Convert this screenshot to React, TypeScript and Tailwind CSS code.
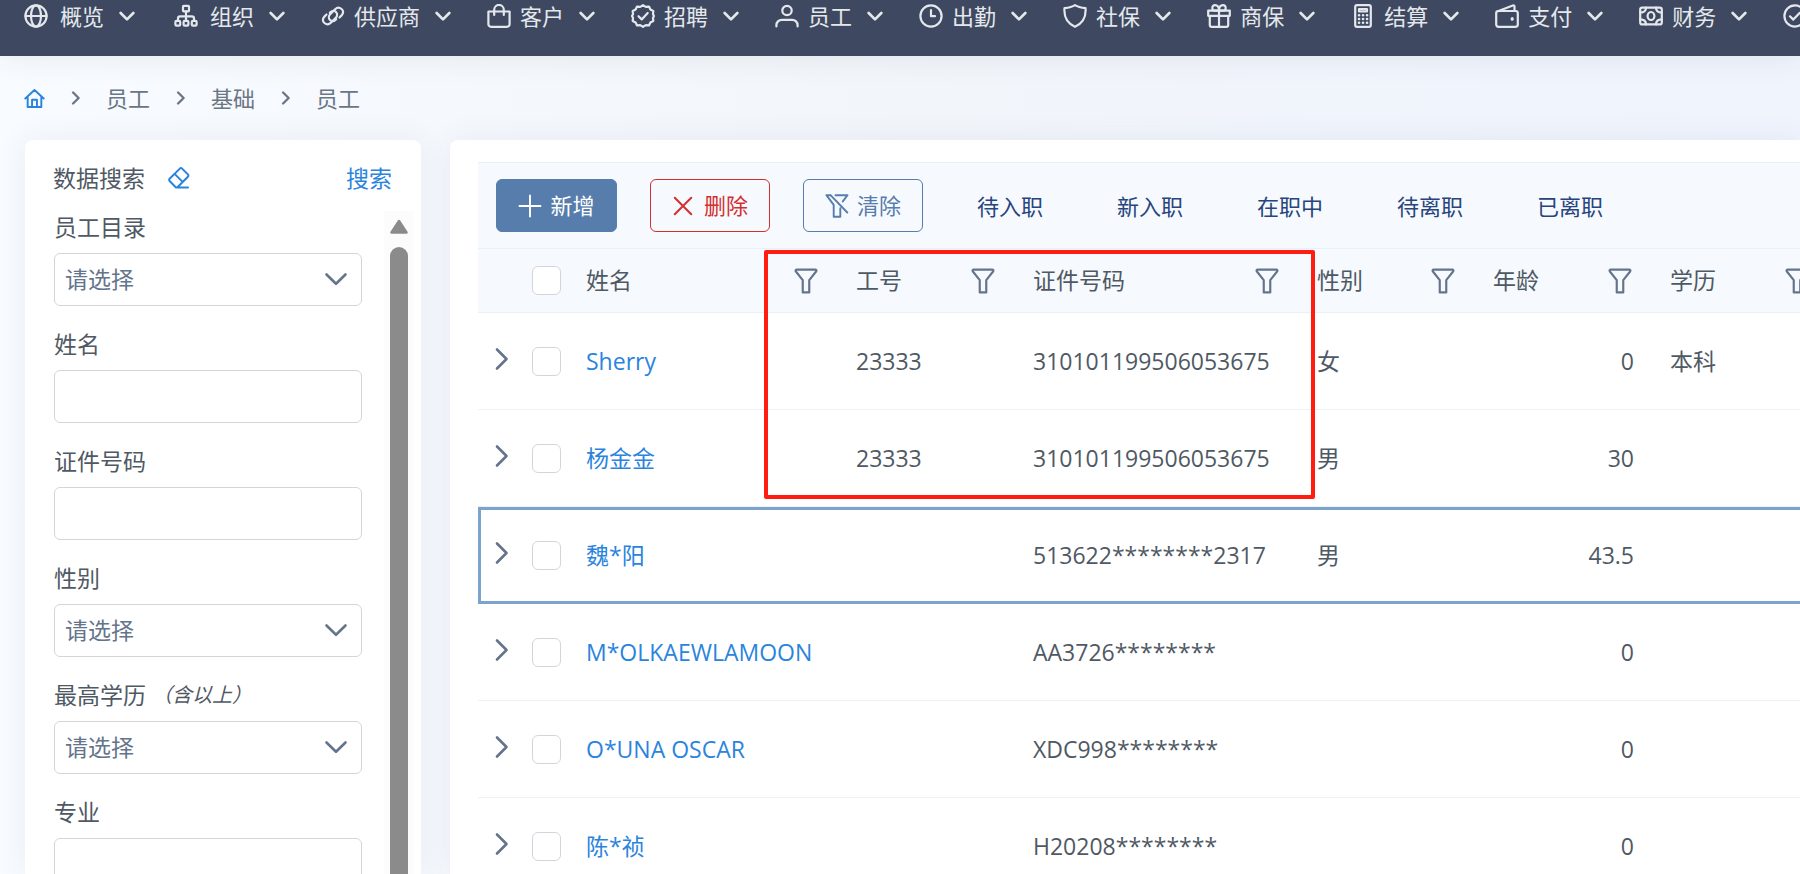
import type { ReactNode } from 'react';

const font = "font-['Open_Sans','Noto_Sans_CJK_SC',sans-serif]";

function Icon({ children, className = 'size-6', width = 2 }: { children: ReactNode; className?: string; width?: number }) {
  return (
    <svg
      viewBox="0 0 24 24"
      fill="none"
      stroke="currentColor"
      strokeWidth={width}
      strokeLinecap="round"
      strokeLinejoin="round"
      className={`shrink-0 ${className}`}
      aria-hidden="true"
    >
      {children}
    </svg>
  );
}

const icons = {
  globe: (
    <>
      <circle cx="12" cy="12" r="10.6" />
      <ellipse cx="12" cy="12" rx="5" ry="10.6" />
      <path d="M1.4 12h21.2" />
    </>
  ),
  sitemap: (
    <>
      <rect x="9" y="1.8" width="6" height="5.6" rx="0.8" />
      <rect x="1.4" y="16.8" width="4.8" height="4.8" rx="1.2" />
      <rect x="9.6" y="16.8" width="4.8" height="4.8" rx="1.2" />
      <rect x="17.8" y="16.8" width="4.8" height="4.8" rx="1.2" />
      <path d="M12 7.4v9.4M4 16.8v-2.2q0-2.2 2.2-2.2h11.6q2.2 0 2.2 2.2v2.2" />
    </>
  ),
  link: (
    <>
      <path d="M5.5 10.5 3.4 12.6c-2 2-2 4.8 0 6.400s4.600 1.600 6.400-.2l5-5c1.800-1.800 1.700-4.300.2-5.800s-3.800-1.500-5.400.1l-.8.8" />
      <path d="M18.5 13.5 20.6 11.4c2-2 2-4.8 0-6.400s-4.600-1.600-6.400.2l-5 5c-1.800 1.800-1.700 4.300-.2 5.800s3.800 1.500 5.400-.1l.8-.8" />
    </>
  ),
  bag: (
    <>
      <path d="M1.4 7.5h21.2v12.7a2.6 2.6 0 0 1-2.6 2.6H4a2.6 2.6 0 0 1-2.6-2.6z" />
      <path d="M7.2 11V5.8a4.8 4.8 0 0 1 9.6 0V11" />
    </>
  ),
  verified: (
    <>
      <path d="M12 1.2l2.8 1.7 3.2-.3 1.4 2.9 2.9 1.5-.3 3.2 1 1.8-1 1.8.3 3.2-2.9 1.5-1.4 2.9-3.2-.3-2.8 1.7-2.8-1.7-3.2.3-1.4-2.9L1.7 17l.3-3.2L1 12l1-1.8L1.7 7l2.9-1.5L6 2.6l3.2.3z" />
      <path d="M7.5 12.2l3.2 3.2 6-6.4" />
    </>
  ),
  user: (
    <>
      <circle cx="12" cy="6.5" r="4.7" />
      <path d="M1.4 22.5v-1.3c0-3 2.4-5.4 5.4-5.4h10.4c3 0 5.4 2.4 5.4 5.4v1.3" />
    </>
  ),
  clock: (
    <>
      <circle cx="12" cy="12" r="10.6" />
      <path d="M12 6v6.2h4" />
    </>
  ),
  shield: <path d="M12 1.2c3 2 6.5 2.6 10.5 3 .7 8-2.5 15-10.5 18.6C4 19.2.8 12.2 1.5 4.2c4-.4 7.5-1 10.5-3z" />,
  gift: (
    <>
      <path d="M1.2 6.6h21.6v5.2H1.2zM2.8 11.8h18.4v9.2a1.8 1.8 0 0 1-1.8 1.8H4.6a1.8 1.8 0 0 1-1.8-1.8zM12 6.6v16.2" />
      <path d="M12 6.6H8c-3.6 0-3.6-5.4 0-5.4 2.6 0 4 2.4 4 5.4zM12 6.6h4c3.6 0 3.6-5.4 0-5.4-2.6 0-4 2.4-4 5.4z" />
    </>
  ),
  calculator: (
    <>
      <rect x="4.2" y="1.2" width="15.6" height="21.6" rx="1.8" />
      <rect x="8" y="5" width="8" height="2.4" />
      <path d="M8 11.3h.1M12 11.3h.1M16 11.3h.1M8 15h.1M12 15h.1M16 15h.1M8 18.7h.1M12 18.7h.1M16 18.7h.1" strokeWidth="2.6" />
    </>
  ),
  wallet: (
    <>
      <rect x="1.2" y="7" width="21.6" height="15.8" rx="2.2" />
      <path d="M3.5 7 17.8 1.5q1.7-.5 1.7 1.3V7" />
      <path d="M17.2 14.6v.6" strokeWidth="3" />
    </>
  ),
  money: (
    <>
      <rect x="1.2" y="3.6" width="21.6" height="16.8" rx="2" />
      <ellipse cx="12" cy="12" rx="3.4" ry="4" />
      <path d="M7 3.6q0 5-5.8 5M17 3.6q0 5 5.8 5M7 20.4q0-5-5.8-5M17 20.4q0-5 5.8-5" />
    </>
  ),
  checkCircle: (
    <>
      <circle cx="12" cy="12" r="10.6" />
      <path d="M7 12.3l3.3 3.3 6.5-6.8" />
    </>
  ),
};

const chevronDown = <path d="M2.5 7.5 12 17l9.5-9.5" />;
const chevronRight = <path d="M7 2.5 16.5 12 7 21.5" />;

const navItems = [
  { label: '概览', icon: icons.globe, wide: true },
  { label: '组织', icon: icons.sitemap, wide: true },
  { label: '供应商', icon: icons.link },
  { label: '客户', icon: icons.bag },
  { label: '招聘', icon: icons.verified },
  { label: '员工', icon: icons.user },
  { label: '出勤', icon: icons.clock },
  { label: '社保', icon: icons.shield },
  { label: '商保', icon: icons.gift },
  { label: '结算', icon: icons.calculator },
  { label: '支付', icon: icons.wallet },
  { label: '财务', icon: icons.money },
];

const searchFields = [
  { id: 'catalog', label: '员工目录', type: 'select' },
  { id: 'name', label: '姓名', type: 'text' },
  { id: 'idNumber', label: '证件号码', type: 'text' },
  { id: 'gender', label: '性别', type: 'select' },
  { id: 'education', label: '最高学历', hint: '（含以上）', type: 'select' },
  { id: 'major', label: '专业', type: 'text' },
];

const statusTabs = ['待入职', '新入职', '在职中', '待离职', '已离职'];

const columns = ['姓名', '工号', '证件号码', '性别', '年龄', '学历'];

const employees = [
  { name: 'Sherry', no: '23333', idNumber: '310101199506053675', gender: '女', age: '0', education: '本科' },
  { name: '杨金金', no: '23333', idNumber: '310101199506053675', gender: '男', age: '30', education: '' },
  { name: '魏*阳', no: '', idNumber: '513622********2317', gender: '男', age: '43.5', education: '', selected: true },
  { name: 'M*OLKAEWLAMOON', no: '', idNumber: 'AA3726********', gender: '', age: '0', education: '' },
  { name: 'O*UNA OSCAR', no: '', idNumber: 'XDC998********', gender: '', age: '0', education: '' },
  { name: '陈*祯', no: '', idNumber: 'H20208********', gender: '', age: '0', education: '' },
];

function TopNav() {
  return (
    <nav className="relative h-14 shrink-0 overflow-hidden bg-[#3e4860] pl-[21px] text-[#e4e8ec]">
      <ul className="flex w-max gap-9">
        {navItems.map((item) => (
          <li key={item.label}>
            <button type="button" className="flex h-8 items-center text-[22px] leading-8">
              <span className={item.wide ? 'flex w-[30px] justify-center' : 'flex w-6 justify-center'}>
                <Icon width={2.2}>{item.icon}</Icon>
              </span>
              <span className="ml-[9px]">{item.label}</span>
              <Icon className="ml-[15px] size-4" width={4}>{chevronDown}</Icon>
            </button>
          </li>
        ))}
        <li>
          <button type="button" aria-label="更多" className="flex h-8 items-center">
            <Icon width={2.2}>{icons.checkCircle}</Icon>
          </button>
        </li>
      </ul>
    </nav>
  );
}

function Breadcrumb() {
  return (
    <nav aria-label="breadcrumb" className="flex h-[84px] shrink-0 items-center pl-6 text-[22px] text-[#6b7685]">
      <a href="#home" aria-label="首页" className="text-[#2a84dd]">
        <Icon className="size-[21px]" width={2.2}>
          <path d="M1.5 12 12 2.2 22.5 12M4.2 9.8v12h15.6v-12M9.2 21.8v-8.3h5.6v8.3" />
        </Icon>
      </a>
      {['员工', '基础', '员工'].map((label, i) => (
        <span key={i} className="flex items-center">
          <span className="flex w-[61px] justify-center">
            <Icon className="size-[14px]" width={4}>{chevronRight}</Icon>
          </span>
          <a href="#crumb">{label}</a>
        </span>
      ))}
    </nav>
  );
}

function SearchPanel() {
  const field = 'h-[53px] w-full rounded-md border border-[#d2d6dc] bg-white px-[10px] text-[23px] text-[#64748b]';
  return (
    <aside className="flex w-[396px] shrink-0 flex-col overflow-hidden rounded-t-lg bg-white shadow-[0_0_30px_rgba(60,80,110,0.08)]">
      <header className="flex h-[71px] shrink-0 items-center pt-1.5 pr-[29px] pl-7 text-[23px]">
        <h2>数据搜索</h2>
        <button type="button" aria-label="清空" className="ml-[22px] text-[#2a84dd]">
          <Icon className="size-6" width={2}>
            <path d="M9 20.5 2.6 14a1.6 1.6 0 0 1 0-2.3L12.8 1.6a1.6 1.6 0 0 1 2.3 0l5.8 5.8a1.6 1.6 0 0 1 0 2.3L10.2 20.5zM7.6 6.9l8 8M9 20.5h12" />
          </Icon>
        </button>
        <button type="button" className="ml-auto text-[#2a84dd]">搜索</button>
      </header>
      <div className="flex min-h-0 flex-1 justify-between pr-[7px] pl-[29px]">
        <form className="flex w-[308px] flex-col gap-[22px]">
          {searchFields.map((f) => (
            <div key={f.id} className="shrink-0">
              <label htmlFor={f.id} className="flex h-[42px] items-center pb-[10px] text-[23px]">
                {f.label}
                {f.hint && <em className="ml-1.5 text-[20px]">{f.hint}</em>}
              </label>
              {f.type === 'select' ? (
                <div className="relative">
                  <select id={f.id} className={`${field} appearance-none`}>
                    <option>请选择</option>
                  </select>
                  <Icon className="pointer-events-none absolute top-[14px] right-[14px] size-6 text-[#64748b]" width={2.6}>
                    <path d="M2.5 7.5 12 16.8l9.5-9.3" />
                  </Icon>
                </div>
              ) : (
                <input id={f.id} type="text" className={field} />
              )}
            </div>
          ))}
        </form>
        {/* scrollbar */}
        <div className="flex w-[30px] flex-col items-center bg-[#fcfcfc] pt-2">
          <svg viewBox="0 0 18 15" className="h-[15px] w-[18px] shrink-0" aria-hidden="true">
            <path d="M9 2 16.5 13.5H1.5z" fill="#8b8b8b" stroke="#8b8b8b" strokeWidth="2.5" strokeLinejoin="round" />
          </svg>
          <div className="mt-[13px] w-[18px] flex-1 rounded-t-full bg-[#8b8b8b]" />
        </div>
      </div>
    </aside>
  );
}

function Toolbar() {
  const button = 'flex h-[53px] items-center justify-center rounded-md border text-[22px]';
  return (
    <div className="flex h-[87px] items-center border-y border-[#e8f0f8] bg-[#f6f9fe] pl-[18px]">
      <div className="flex shrink-0 gap-[33px]">
        <button type="button" className={`${button} w-[121px] gap-2 border-[#567dab] bg-[#567dab] text-white`}>
          <Icon className="size-6" width={1.9}>
            <path d="M12 1.5v21M1.5 12h21" />
          </Icon>
          新增
        </button>
        <button type="button" className={`${button} w-[120px] gap-[10px] border-[#d32f2f] text-[#d32f2f]`}>
          <Icon className="size-[22px]" width={2.2}>
            <path d="M3 3l18 18M21 3 3 21" />
          </Icon>
          删除
        </button>
        <button type="button" className={`${button} w-[120px] gap-2 border-[#567dab] text-[#567dab]`}>
          <Icon className="size-6" width={1.9}>
            <path d="M5.5 1.2H1.4l7.3 9.6v12h6.6v-8.6M10.5 1.2h12l-4.7 6.2M5.5 1.2l16.8 17.3" />
          </Icon>
          清除
        </button>
      </div>
      <div className="ml-[54px] flex gap-[74px] pt-0.5 text-[22px] text-[#27457c]">
        {statusTabs.map((tab) => (
          <button key={tab} type="button" className="shrink-0">
            {tab}
          </button>
        ))}
      </div>
    </div>
  );
}

function Checkbox({ label }: { label: string }) {
  return (
    <input
      type="checkbox"
      aria-label={label}
      className="block size-[29px] appearance-none rounded-md border border-[#d2d6dc] bg-white"
    />
  );
}

function EmployeeTable() {
  return (
    <table className="w-full min-w-[1351px] table-fixed border-separate border-spacing-0 text-left text-[23px]">
      <colgroup>
        <col className="w-9" />
        <col className="w-[54px]" />
        <col className="w-[270px]" />
        <col className="w-[177px]" />
        <col className="w-[284px]" />
        <col className="w-[176px]" />
        <col className="w-[177px]" />
        <col className="w-[177px]" />
      </colgroup>
      <thead>
        <tr className="h-16 bg-[#f6f9fe]">
          <th className="border-b border-[#e8f0f8]" />
          <th className="border-b border-[#e8f0f8] pl-[18px]">
            <Checkbox label="全选" />
          </th>
          {columns.map((column) => (
            <th key={column} className="border-b border-[#e8f0f8] pr-[19px] pl-[18px] font-normal">
              <div className="flex items-center justify-between">
                {column}
                <button type="button" aria-label={`筛选${column}`} className="text-[#64748b]">
                  <Icon className="size-[26px]" width={2}>
                    <path d="M3.5 1.5h17q1.5 0 1 1.5L15 11.2V22.5H9V11.2L2.5 3q-.5-1.5 1-1.5z" />
                  </Icon>
                </button>
              </div>
            </th>
          ))}
        </tr>
      </thead>
      <tbody>
        {employees.map((e) => (
          <tr
            key={e.name}
            className={e.selected ? 'h-[97px] outline-3 -outline-offset-3 outline-[#7ca3cb]' : 'h-[97px]'}
          >
            <td className="border-b border-[#eef2f7] pb-1 pl-3">
              <button type="button" aria-label="展开" className="block text-[#64748b]">
                <Icon className="size-6" width={2.6}>{chevronRight}</Icon>
              </button>
            </td>
            <td className="border-b border-[#eef2f7] pl-[18px]">
              <Checkbox label={e.name} />
            </td>
            <td className="border-b border-[#eef2f7] px-[18px] whitespace-nowrap">
              <a href="#employee" className="text-[#2a84dd]">{e.name}</a>
            </td>
            <td className="border-b border-[#eef2f7] px-[18px]">{e.no}</td>
            <td className="border-b border-[#eef2f7] px-[18px]">{e.idNumber}</td>
            <td className="border-b border-[#eef2f7] px-[18px]">{e.gender}</td>
            <td className="border-b border-[#eef2f7] px-[18px] text-right">{e.age}</td>
            <td className="border-b border-[#eef2f7] px-[18px]">{e.education}</td>
          </tr>
        ))}
      </tbody>
    </table>
  );
}

export default function App() {
  return (
    <div className={`flex h-screen flex-col overflow-hidden bg-linear-to-r from-[#f8fbff] via-[#f2f5fa] to-[#eff4fd] text-[#4f5964] ${font}`}>
      <div className="relative shadow-[0_0_30px_rgba(60,70,80,0.1)]">
        <TopNav />
      </div>
      <Breadcrumb />
      <div className="flex min-h-0 flex-1 gap-[29px] pl-[25px]">
        <SearchPanel />
        <main className="min-w-0 flex-1 overflow-hidden rounded-tl-lg bg-white pt-[22px] pl-7 shadow-[0_0_30px_rgba(60,80,110,0.08)]">
          <div className="relative">
            <Toolbar />
            <EmployeeTable />
            {/* highlighted cells */}
            <div className="pointer-events-none absolute top-[88px] left-[286px] h-[249px] w-[551px] rounded-xs border-4 border-[#ff1c10]" />
          </div>
        </main>
      </div>
    </div>
  );
}
